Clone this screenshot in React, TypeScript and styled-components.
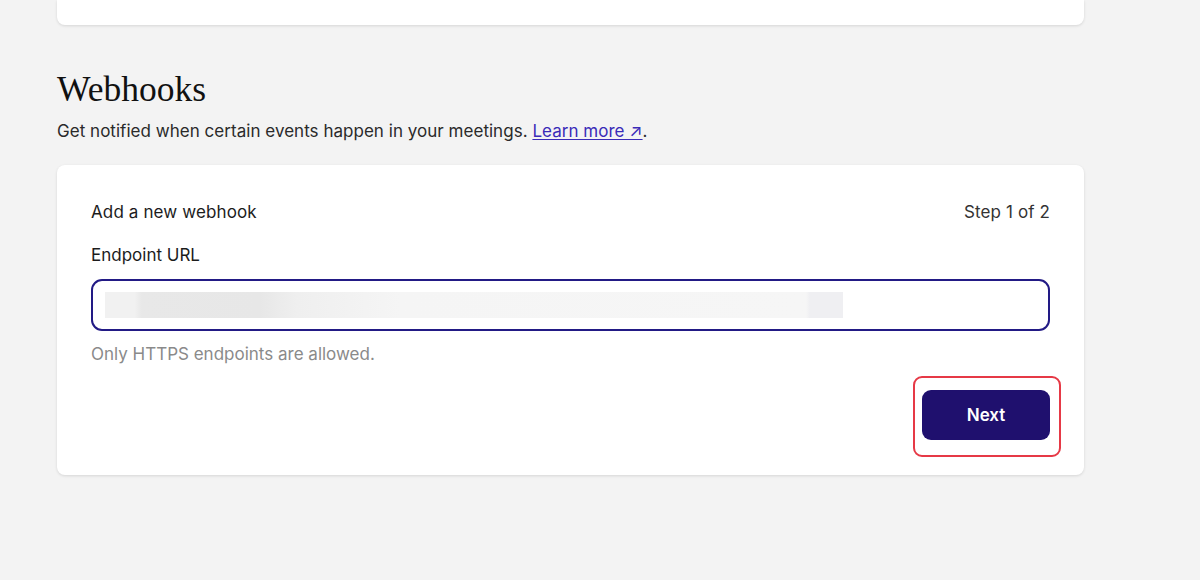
import React from 'react'
import styled, { createGlobalStyle } from 'styled-components'

const GlobalStyle = createGlobalStyle`
  html, body {
    margin: 0;
    padding: 0;
    background: #f3f3f3;
    font-family: Inter, 'Noto Sans', sans-serif;
    color: #1c1c1c;
  }
`

const Page = styled.div`
  width: 1200px;
  height: 580px;
  overflow: hidden;
  box-sizing: border-box;
  padding: 0 116px 0 57px;
`

const Card = styled.div<{ $pad?: string }>`
  background: #fff;
  border-radius: 8px;
  box-shadow: 0 1px 3px rgba(0, 0, 0, 0.12);
  padding: ${({ $pad }) => $pad || '0'};
  box-sizing: border-box;
`

const TopCard = styled(Card)`
  height: 25px;
  border-top-left-radius: 0;
  border-top-right-radius: 0;
`

const Section = styled.section`
  padding-top: 44px;
`

const Title = styled.h2`
  margin: 0;
  font-family: 'Liberation Serif', 'Times New Roman', serif;
  font-weight: 400;
  font-size: 35.5px;
  line-height: 40px;
  color: #111;
`

const Lead = styled.p`
  margin: 12px 0 24px;
  font-size: 17px;
  line-height: 20px;
  letter-spacing: 0.03px;
  color: #2a2a2a;
`

const LearnLink = styled.a`
  color: #3a2bb8;
  text-decoration: underline;
  text-underline-offset: 2px;
`

const Head = styled.div`
  display: flex;
  justify-content: space-between;
  align-items: center;
  font-size: 17px;
  line-height: 20px;
  letter-spacing: 0.12px;
`

const Step = styled.span`
  color: #333;
`

const Label = styled.label`
  display: block;
  margin: 23px 0 14px;
  font-size: 17px;
  line-height: 20px;
  color: #1c1c1c;
`

const InputBox = styled.div`
  height: 52px;
  box-sizing: border-box;
  border: 2px solid #221a85;
  border-radius: 11px;
  display: flex;
  align-items: center;
  padding: 0 12px;
`

const Blurred = styled.div`
  width: 738px;
  height: 26px;
  background: linear-gradient(
    90deg,
    #f1f1f1 0%,
    #f1f1f1 4%,
    #e8e8e8 5%,
    #e7e7e7 21%,
    #efefef 26%,
    #f5f5f5 40%,
    #f6f6f6 95%,
    #efeff2 95.5%,
    #efeff2 100%
  );
`

const Help = styled.p`
  margin: 13px 0 0;
  font-size: 17px;
  line-height: 20px;
  color: #8a8a8a;
`

const Actions = styled.div`
  display: flex;
  justify-content: flex-end;
  margin-top: 12px;
  margin-right: -11px;
`

const Highlight = styled.div`
  border: 2px solid #e63946;
  border-radius: 9px;
  padding: 12px 9px 15px 7px;
`

const Button = styled.button`
  display: block;
  width: 128px;
  height: 50px;
  border: none;
  border-radius: 9px;
  background: #1f106e;
  color: #fff;
  font-family: Inter, sans-serif;
  font-weight: 600;
  font-size: 17px;
  cursor: pointer;
`

export default function App() {
  return (
    <>
      <GlobalStyle />
      <Page>
        <TopCard />
        <Section>
          <Title>Webhooks</Title>
          <Lead>
            Get notified when certain events happen in your meetings.{' '}
            <LearnLink href="#">Learn more ↗</LearnLink>.
          </Lead>
          <Card $pad="37px 34px 18px">
            <Head>
              <span>Add a new webhook</span>
              <Step>Step 1 of 2</Step>
            </Head>
            <Label>Endpoint URL</Label>
            <InputBox>
              <Blurred />
            </InputBox>
            <Help>Only HTTPS endpoints are allowed.</Help>
            <Actions>
              <Highlight>
                <Button>Next</Button>
              </Highlight>
            </Actions>
          </Card>
        </Section>
      </Page>
    </>
  )
}
